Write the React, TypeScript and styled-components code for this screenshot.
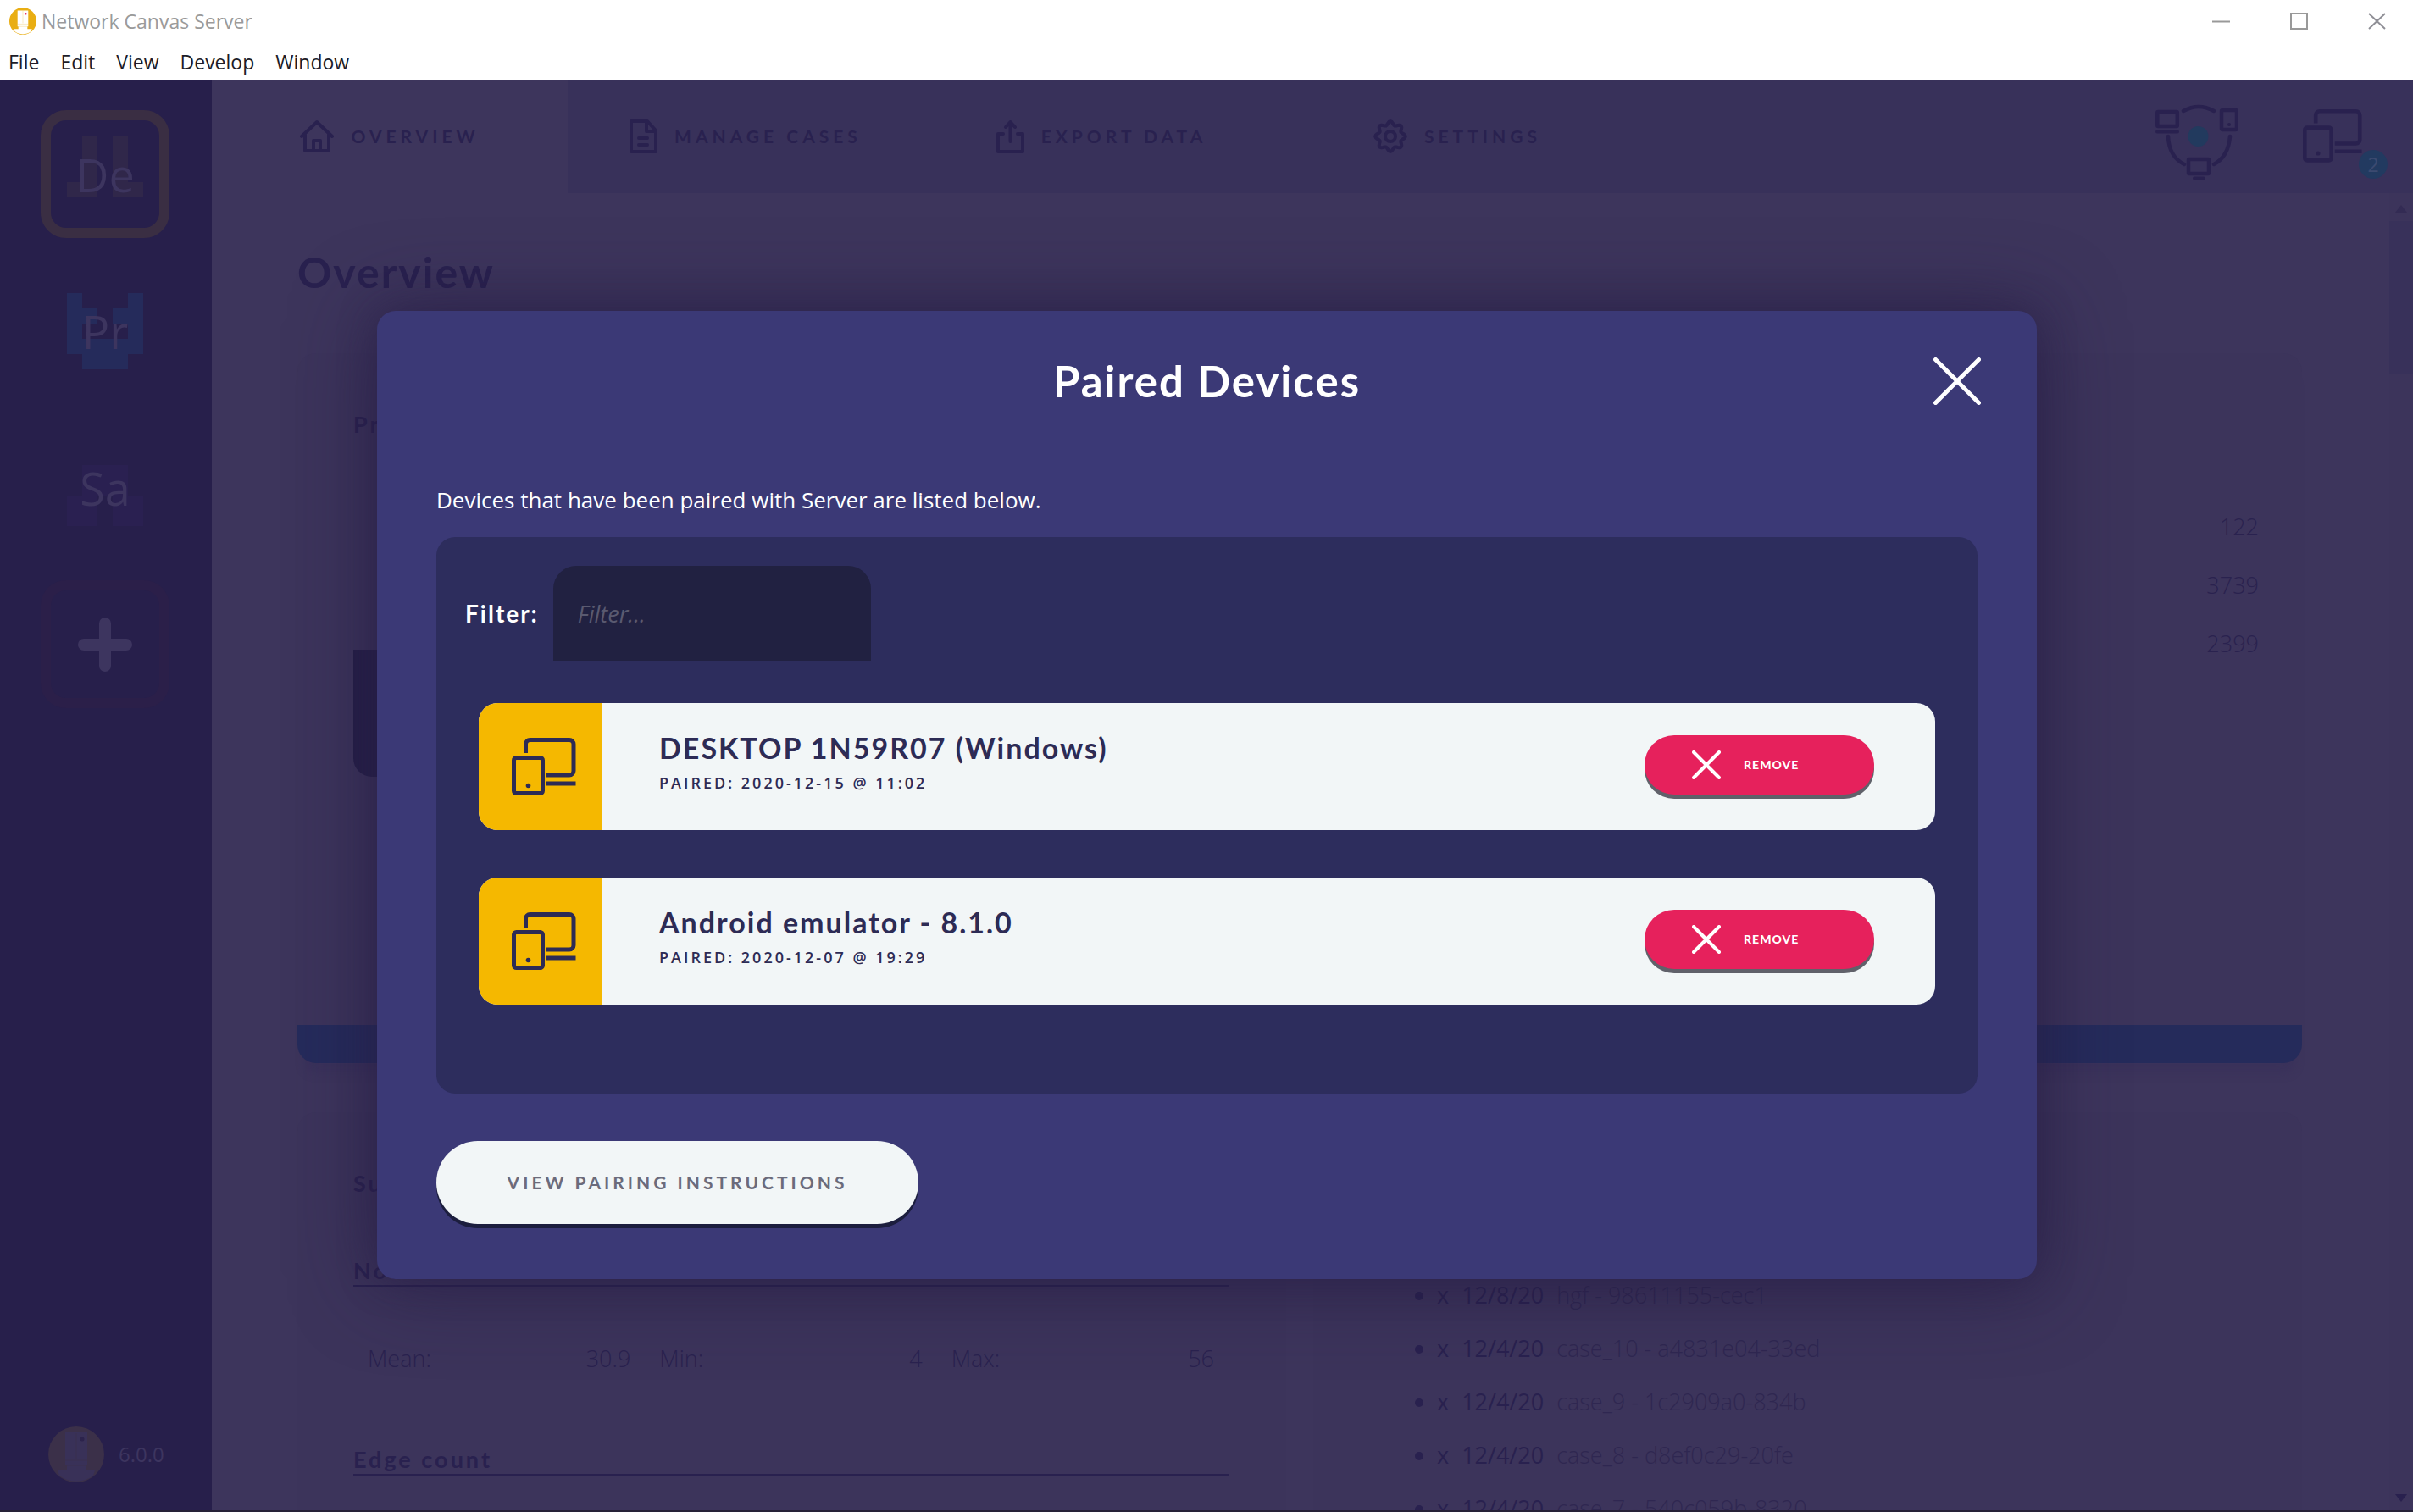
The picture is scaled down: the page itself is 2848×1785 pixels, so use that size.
import React from "react";
import styled, { createGlobalStyle, css } from "styled-components";

const color = {
  ink: "#29214f",
  faded: "#2a224f",
  page: "#3d355c",
  card: "#3c345b",
  bar: "#38315a",
  rail: "#271f4b",
  railText: "#3d355f",
  modal: "#3b3976",
  panel: "#2d2d5d",
  input: "#212141",
  light: "#f2f6f7",
  navy: "#2d2b55",
  mustard: "#f5b800",
  red: "#e6215c",
};

const heading = `Lato, "Open Sans", sans-serif`;
const body = `"Open Sans", "Noto Sans", sans-serif`;

const GlobalStyle = createGlobalStyle`
  *, *::before, *::after { box-sizing: border-box; }
  body { margin: 0; font-family: ${body}; font-size: 27px; line-height: 36px; color: ${color.ink}; }
  h1, h2, h3, p, ul, dl, dd { margin: 0; padding: 0; }
  button, input { font: inherit; color: inherit; border: 0; padding: 0; margin: 0; background: none; }
  svg { display: block; }
`;

const Window = styled.div`
  display: flex;
  flex-direction: column;
  height: 100vh;
  overflow: hidden;
  background: #fff;
`;

const TitleBar = styled.header`
  display: flex;
  align-items: center;
  height: 50px;
  padding: 0 32px 0 11px;
  gap: 6px;
  font-size: 23px;
  color: #9a9a9a;
`;

const WindowButtons = styled.div`
  display: flex;
  gap: 71px;
  margin-left: auto;
`;

const MenuBar = styled.nav`
  display: flex;
  align-items: center;
  gap: 25px;
  height: 44px;
  padding: 2px 10px 0;
  font-size: 23px;
  color: #1c1c28;
`;

const Workspace = styled.div`
  position: relative;
  display: flex;
  flex: 1;
  min-height: 0;
  background: ${color.page};
  border-bottom: 2px solid #262238;
`;

const Rail = styled.aside`
  display: flex;
  flex-direction: column;
  gap: 34px;
  width: 250px;
  padding: 36px 50px 33px 48px;
  background: ${color.rail};
  color: ${color.railText};
`;

const RailTile = styled.button<{ $border?: string }>`
  display: grid;
  place-items: center;
  height: 151px;
  border: 12px solid ${(p) => p.$border ?? "transparent"};
  border-radius: 30px;
  font-size: 54px;
  line-height: 60px;

  > * { grid-area: 1 / 1; }
`;

const Version = styled.div`
  display: flex;
  align-items: center;
  gap: 17px;
  margin-top: auto;
  padding-left: 9px;
  font-size: 24px;
  white-space: nowrap;
`;

const Main = styled.main`
  display: flex;
  flex-direction: column;
  flex: 1;
  min-width: 0;
`;

const TabBar = styled.nav`
  display: flex;
  flex: none;
  height: 134px;
  padding-right: 30px;
  background: ${color.bar};
`;

const Tab = styled.button<{ $active?: boolean }>`
  display: flex;
  align-items: center;
  justify-content: center;
  gap: 20px;
  flex: 0 1 420px;
  font-family: ${heading};
  font-size: 21px;
  font-weight: 700;
  letter-spacing: 5px;
  text-transform: uppercase;
  ${(p) => p.$active && css`background: ${color.page};`}
`;

const Status = styled.div`
  display: flex;
  gap: 76px;
  margin-left: auto;
  padding-top: 29px;
`;

const DeviceStatus = styled.button`
  position: relative;
  align-self: flex-start;
  padding: 6px 30px 0 0;
`;

const Badge = styled.span`
  position: absolute;
  right: 0;
  top: 54px;
  width: 34px;
  height: 34px;
  border-radius: 50%;
  background: #223a60;
  color: #3c4a70;
  font-size: 23px;
  line-height: 34px;
`;

const ScrollArea = styled.div`
  display: flex;
  flex: 1;
  min-height: 0;
`;

const Content = styled.div`
  flex: 1;
  overflow: hidden;
  padding: 63px 103px 0 101px;
`;

const ScrollTrack = styled.div`
  display: flex;
  flex-direction: column;
  align-items: center;
  width: 28px;
  padding: 14px 0 10px;
  background: ${color.card};
`;

const ScrollThumb = styled.div`
  width: 100%;
  height: 181px;
  margin: 10px 0 auto;
  background: ${color.bar};
`;

const PageTitle = styled.h1`
  margin-bottom: 66px;
  font-family: ${heading};
  font-size: 50px;
  line-height: 60px;
  font-weight: 700;
  letter-spacing: 2px;
`;

const Card = styled.section<{ $accent?: boolean }>`
  padding: 66px 68px 66px 66px;
  border-radius: 22px;
  background: ${color.card};
  ${(p) =>
    p.$accent &&
    css`
      min-height: 838px;
      margin-bottom: 58px;
      padding-right: 51px;
      border-bottom: 45px solid #252b5b;
      box-shadow: 0 20px 10px -8px #3a325b;
    `}
`;

const CardTitle = styled.h2`
  font-family: ${heading};
  font-size: 27px;
  line-height: 36px;
  font-weight: 700;
  letter-spacing: 3px;
`;

const Split = styled.div`
  display: flex;
  justify-content: space-between;
`;

const Preview = styled.div`
  width: 400px;
  height: 150px;
  margin-top: 248px;
  border-radius: 0 0 22px 22px;
  background: #251f47;
`;

const Totals = styled.div`
  padding-top: 68px;
  line-height: 69px;
  text-align: right;
  color: ${color.faded};
  font-weight: 300;
`;

const Columns = styled.div`
  display: grid;
  grid-template-columns: 1fr 1fr;
  gap: 32px;
`;

const Measure = styled.h3`
  border-bottom: 2px solid ${color.ink};
  font-family: ${heading};
  font-size: 27px;
  line-height: 34px;
  font-weight: 700;
  letter-spacing: 3px;
`;

const Stats = styled.dl`
  display: grid;
  grid-template-columns: repeat(3, 1fr);
  padding: 67px 0 84px;
  color: ${color.faded};
`;

const Stat = styled.div`
  display: flex;
  justify-content: space-between;
  padding: 0 17px;
  font-weight: 300;
`;

const MeasureGroup = styled.div`
  padding-top: 68px;
`;

const CaseList = styled.ul`
  && {
    margin-top: 82px;
    padding-left: 80px;
  }
  line-height: 63px;
`;

const Case = styled.li`
  > span { display: inline-flex; gap: 15px; }
`;

const CaseName = styled.span`
  color: #2f2751;
  font-weight: 300;
`;

const Overlay = styled.div`
  position: absolute;
  inset: 0;
  display: flex;
  align-items: center;
  padding: 0 444px 0 445px;
`;

const Modal = styled.section`
  flex: 1;
  padding: 47px 70px 65px;
  border-radius: 22px;
  background: ${color.modal};
  box-shadow: 0 0 40px rgba(42, 32, 72, 0.5), 0 4px 96px rgba(38, 28, 68, 0.7);
  color: #fff;
`;

const ModalHeader = styled.div`
  display: grid;
  grid-template-columns: 1fr auto 1fr;
  align-items: center;
  height: 72px;
  margin-bottom: 86px;
`;

const ModalTitle = styled.h2`
  grid-column: 2;
  font-family: ${heading};
  font-size: 51px;
  line-height: 60px;
  font-weight: 700;
  letter-spacing: 2px;
`;

const CloseButton = styled.button`
  justify-self: end;
  margin-right: -4px;
`;

const Intro = styled.p`
  font-size: 26px;
`;

const Panel = styled.div`
  margin: 26px 0 56px;
  padding: 34px 50px 105px;
  border-radius: 22px;
  background: ${color.panel};
`;

const FilterRow = styled.div`
  display: flex;
  align-items: center;
  gap: 17px;
  margin: 0 -16px 50px;
`;

const FilterLabel = styled.label`
  font-family: ${heading};
  font-size: 28px;
  font-weight: 700;
  letter-spacing: 2px;
`;

const FilterInput = styled.input`
  width: 375px;
  height: 112px;
  padding: 0 29px;
  border-radius: 27px 27px 0 0;
  background: ${color.input};
  &::placeholder { color: #5a5a70; font-style: italic; opacity: 1; }
`;

const Devices = styled.div`
  display: grid;
  gap: 56px;
`;

const Device = styled.article`
  display: flex;
  align-items: center;
  height: 150px;
  padding-right: 72px;
  border-radius: 22px;
  overflow: hidden;
  background: ${color.light};
  color: ${color.navy};
`;

const DeviceIcon = styled.div`
  display: grid;
  place-items: center;
  align-self: stretch;
  width: 145px;
  padding-left: 8px;
  background: ${color.mustard};
`;

const DeviceText = styled.div`
  flex: 1;
  padding: 0 0 8px 68px;
`;

const DeviceName = styled.h3`
  font-family: ${heading};
  font-size: 34px;
  line-height: 46px;
  font-weight: 700;
  letter-spacing: 2px;
`;

const Paired = styled.p`
  font-size: 18px;
  line-height: 36px;
  font-weight: 600;
  letter-spacing: 3px;
  text-transform: uppercase;
`;

const Pill = styled.button<{ $danger?: boolean }>`
  display: flex;
  align-items: center;
  font-family: ${heading};
  font-weight: 700;
  text-transform: uppercase;
  ${(p) =>
    p.$danger
      ? css`
          gap: 27px;
          width: 271px;
          height: 70px;
          margin-bottom: 4px;
          padding-left: 56px;
          border-radius: 35px;
          background: ${color.red};
          box-shadow: 0 5px 0 #60616a;
          color: #fff;
          font-size: 14px;
          font-weight: 900;
          letter-spacing: 1px;
        `
      : css`
          justify-content: center;
          width: 569px;
          height: 98px;
          border-radius: 49px;
          background: ${color.light};
          box-shadow: 0 5px 0 #1c1e3e;
          color: #6b6b7b;
          font-size: 21px;
          letter-spacing: 4px;
        `}
`;

const Cross = ({ size, weight }: { size: number; weight: number }) => (
  <svg width={size} height={size} viewBox={`0 0 ${size} ${size}`} stroke="currentColor" strokeWidth={weight} strokeLinecap="round">
    <path d={`M${weight / 2} ${weight / 2}L${size - weight / 2} ${size - weight / 2}M${size - weight / 2} ${weight / 2}L${weight / 2} ${size - weight / 2}`} />
  </svg>
);

const DevicesIcon = ({ width }: { width: number }) => (
  <svg width={width} viewBox="0 0 76 68" fill="none" stroke="currentColor" strokeWidth="5" strokeLinejoin="round">
    <rect x="2.5" y="23.5" width="34" height="42" rx="3" />
    <path d="M16.500 18V7.500a5 5 0 0 1 5-5H68a5 5 0 0 1 5 5V39a5 5 0 0 1-5 5H41" />
    <path d="M41 54H75.500" />
    <circle cx="19.500" cy="56.500" r="2.800" fill="currentColor" stroke="none" />
  </svg>
);

const NetworkIcon = () => (
  <svg width="98" height="90" viewBox="0 0 98 90" fill="none" stroke="currentColor" strokeWidth="4.500" strokeLinecap="round" strokeLinejoin="round">
    <rect x="2.300" y="9" width="23.500" height="17" rx="1" />
    <path d="M2 32.500H26" strokeWidth="4" />
    <rect x="78" y="7" width="18" height="23" rx="1.500" />
    <circle cx="87" cy="24" r="2" fill="currentColor" stroke="none" />
    <rect x="39" y="65" width="24" height="17" rx="1" />
    <path d="M46 87.500H57" strokeWidth="4" />
    <path d="M33 8Q51 -2 69 8M15 38Q16 62 34 71M88 38Q86 62 69 71" />
    <circle cx="50.500" cy="38" r="12" fill="#223a5e" stroke="none" />
  </svg>
);

const HomeIcon = () => (
  <svg width="40" height="40" viewBox="0 0 40 40" fill="none" stroke="currentColor" strokeWidth="4" strokeLinecap="round" strokeLinejoin="round">
    <path d="M2 20L20 3L38 20M6 18V37H34V18M16 36V25H24V36" />
  </svg>
);

const DocumentIcon = () => (
  <svg width="33" height="40" viewBox="0 0 33 40" fill="none" stroke="currentColor" strokeWidth="4" strokeLinecap="round" strokeLinejoin="round">
    <path d="M2 2H21L31 13V38H2ZM20 3V14H30M11 22H21M11 30H21" />
  </svg>
);

const ExportIcon = () => (
  <svg width="33" height="40" viewBox="0 0 33 40" fill="none" stroke="currentColor" strokeWidth="4" strokeLinecap="round" strokeLinejoin="round">
    <path d="M8 17H2V38H31V17H25M16.500 26V3M11 9L16.500 3L22 9" />
  </svg>
);

const gearPoints = Array.from({ length: 64 }, (_, i) => {
  const a = (i / 64) * Math.PI * 2;
  const r = 15.6 + 2.2 * Math.cos(8 * a);
  return `${(20 + r * Math.sin(a)).toFixed(2)},${(20 - r * Math.cos(a)).toFixed(2)}`;
}).join(" ");

const GearIcon = () => (
  <svg width="40" height="40" viewBox="0 0 40 40" fill="none" stroke="currentColor" strokeWidth="4" strokeLinejoin="round">
    <polygon points={gearPoints} />
    <circle cx="20" cy="20" r="6" />
  </svg>
);

const ServerLogo = ({ size, disc, tower, dot }: { size: number; disc: string; tower: string; dot: string }) => (
  <svg width={size} height={size} viewBox="0 0 66 66">
    <circle cx="33" cy="33" r="33" fill={disc} />
    <path d="M20 7H46V46H44V52H55L53 58A33 33 0 0 1 13 58L11 52H22V46H20Z" fill={tower} />
    <path d="M33 8V38M20 40H46M22 46H44" stroke={disc} strokeWidth="1" opacity="0.5" />
    <circle cx="40" cy="15" r="2.500" fill={dot} />
  </svg>
);

const Identicon = ({ rows, fill }: { rows: string[]; fill: string }) => (
  <svg width="90" height="90" viewBox="0 0 90 90" fill={fill} shapeRendering="crispEdges">
    {rows.flatMap((row, y) =>
      [...row].map((cell, x) => (cell === "#" ? <rect key={`${x}-${y}`} x={x * 18} y={y * 18} width="18" height="18" /> : null))
    )}
  </svg>
);

const Triangle = ({ down }: { down?: boolean }) => (
  <svg width="16" height="9" viewBox="0 0 16 9" fill={down ? "#29214f" : "#332b54"}>
    <path d={down ? "M1 0H15L8 9Z" : "M1 9H15L8 0Z"} />
  </svg>
);

const protocols = [
  { name: "De", fill: "#30274a", border: "#3a2e43", rows: [".#.#.", ".#.#.", ".#.#.", "##.##", "....."] },
  { name: "Pr", fill: "#252b5b", rows: ["#...#", "##.##", "#...#", "#####", ".###."] },
  { name: "Sa", fill: "#2a2051", rows: [".....", ".###.", ".###.", "##.##", "##.##"] },
];

const cases = [
  ["12/8/20", "hgf - 98611155-cec1"],
  ["12/4/20", "case_10 - a4831e04-33ed"],
  ["12/4/20", "case_9 - 1c2909a0-834b"],
  ["12/4/20", "case_8 - d8ef0c29-20fe"],
  ["12/4/20", "case_7 - 540c059b-8320"],
];

const devices = [
  { name: "DESKTOP 1N59R07 (Windows)", paired: "Paired: 2020-12-15 @ 11:02" },
  { name: "Android emulator - 8.1.0", paired: "Paired: 2020-12-07 @ 19:29" },
];

const nodeStats = [["Mean:", "30.9"], ["Min:", "4"], ["Max:", "56"]];

export default function App() {
  return (
    <Window>
      <GlobalStyle />
      <TitleBar>
        <ServerLogo size={32} disc="#e9ae13" tower="#ffffff" dot="#e6215c" />
        Network Canvas Server
        <WindowButtons>
          <button aria-label="Minimize">
            <svg width="21" height="20" stroke="#999"><path d="M0 10.500H21" strokeWidth="2" /></svg>
          </button>
          <button aria-label="Maximize">
            <svg width="21" height="20" fill="none" stroke="#999" strokeWidth="2"><rect x="1" y="1" width="19" height="18" /></svg>
          </button>
          <button aria-label="Close window">
            <svg width="21" height="20" stroke="#8f8f96" strokeWidth="2"><path d="M1 1L20 19M20 1L1 19" /></svg>
          </button>
        </WindowButtons>
      </TitleBar>
      <MenuBar>
        {["File", "Edit", "View", "Develop", "Window"].map((item) => (
          <button key={item}>{item}</button>
        ))}
      </MenuBar>
      <Workspace>
        <Rail>
          {protocols.map((p) => (
            <RailTile key={p.name} $border={p.border}>
              <Identicon rows={p.rows} fill={p.fill} />
              <span>{p.name}</span>
            </RailTile>
          ))}
          <RailTile $border="#2b1f49" aria-label="Add protocol">
            <svg width="64" height="64" viewBox="0 0 64 64" stroke={color.railText} strokeWidth="14" strokeLinecap="round">
              <path d="M32 7V57M7 32H57" />
            </svg>
          </RailTile>
          <Version>
            <ServerLogo size={66} disc="#3b3049" tower="#393158" dot="#2c234c" />
            6.0.0
          </Version>
        </Rail>
        <Main>
          <TabBar>
            <Tab $active><HomeIcon />Overview</Tab>
            <Tab><DocumentIcon />Manage Cases</Tab>
            <Tab><ExportIcon />Export Data</Tab>
            <Tab><GearIcon />Settings</Tab>
            <Status>
              <NetworkIcon />
              <DeviceStatus aria-label="Paired devices">
                <DevicesIcon width={70} />
                <Badge>2</Badge>
              </DeviceStatus>
            </Status>
          </TabBar>
          <ScrollArea>
            <Content>
              <PageTitle>Overview</PageTitle>
              <Card $accent>
                <CardTitle>Protocol</CardTitle>
                <Split>
                  <Preview />
                  <Totals>
                    <div>122</div>
                    <div>3739</div>
                    <div>2399</div>
                  </Totals>
                </Split>
              </Card>
              <Columns>
                <Card>
                  <CardTitle>Summary</CardTitle>
                  <MeasureGroup>
                    <Measure>Node count</Measure>
                    <Stats>
                      {nodeStats.map(([label, value]) => (
                        <Stat key={label}><dt>{label}</dt><dd>{value}</dd></Stat>
                      ))}
                    </Stats>
                    <Measure>Edge count</Measure>
                  </MeasureGroup>
                </Card>
                <Card>
                  <CardTitle>Cases</CardTitle>
                  <CaseList>
                    {cases.map(([date, name]) => (
                      <Case key={name}>
                        <span><span>x</span><span>{date}</span><CaseName>{name}</CaseName></span>
                      </Case>
                    ))}
                  </CaseList>
                </Card>
              </Columns>
            </Content>
            <ScrollTrack>
              <Triangle />
              <ScrollThumb />
              <Triangle down />
            </ScrollTrack>
          </ScrollArea>
        </Main>
        <Overlay>
          <Modal role="dialog" aria-labelledby="paired-title">
            <ModalHeader>
              <ModalTitle id="paired-title">Paired Devices</ModalTitle>
              <CloseButton aria-label="Close"><Cross size={56} weight={5} /></CloseButton>
            </ModalHeader>
            <Intro>Devices that have been paired with Server are listed below.</Intro>
            <Panel>
              <FilterRow>
                <FilterLabel htmlFor="device-filter">Filter:</FilterLabel>
                <FilterInput id="device-filter" placeholder="Filter..." />
              </FilterRow>
              <Devices>
                {devices.map((d) => (
                  <Device key={d.name}>
                    <DeviceIcon><DevicesIcon width={76} /></DeviceIcon>
                    <DeviceText>
                      <DeviceName>{d.name}</DeviceName>
                      <Paired>{d.paired}</Paired>
                    </DeviceText>
                    <Pill $danger><Cross size={34} weight={4} />Remove</Pill>
                  </Device>
                ))}
              </Devices>
            </Panel>
            <Pill>View Pairing Instructions</Pill>
          </Modal>
        </Overlay>
      </Workspace>
    </Window>
  );
}
